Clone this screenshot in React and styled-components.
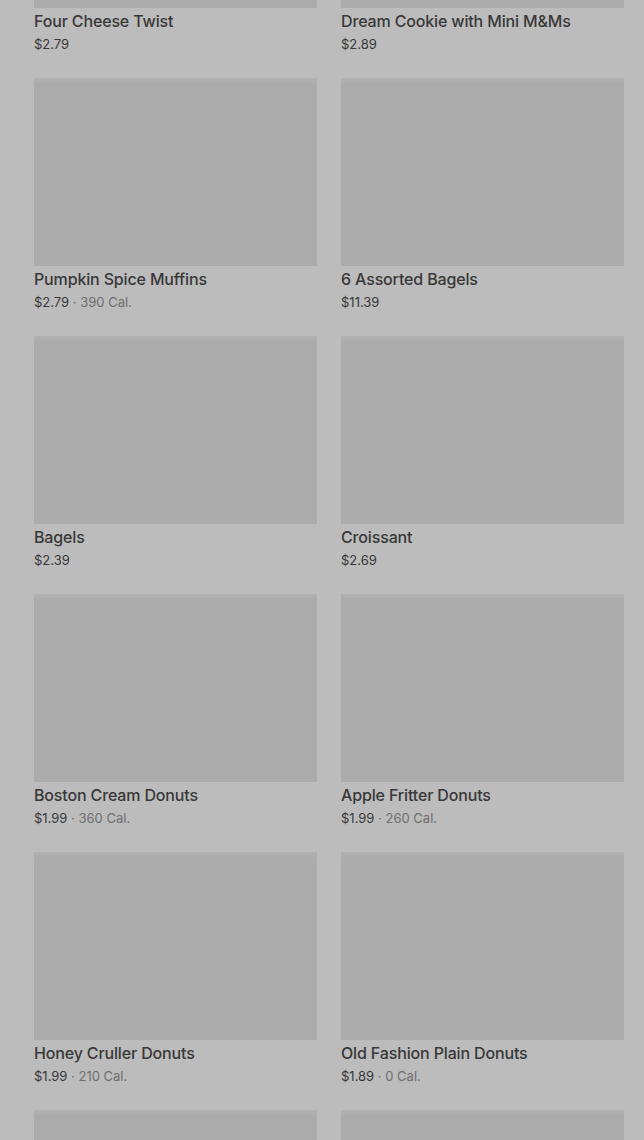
import styled, { createGlobalStyle } from "styled-components";

const GlobalStyle = createGlobalStyle`
  html, body {
    margin: 0;
    padding: 0;
    overflow: hidden;
    background: #bcbcbc;
  }
`;

const Page = styled.div`
  height: 1140px;
  overflow: hidden;
  background: #bcbcbc;
  font-family: Inter, "Noto Sans", "Liberation Sans", sans-serif;
`;

/* the list is scrolled part-way down, so the first row starts above the fold */
const Grid = styled.div`
  margin-top: -180px;
  padding: 0 20px 0 34px;
  display: grid;
  grid-template-columns: 283px 283px;
  column-gap: 24px;
  row-gap: 24px;
`;

const Card = styled.div`
  display: flex;
  flex-direction: column;
`;

const Thumb = styled.div`
  height: 188px;
  background: linear-gradient(180deg, #b2b2b2 0, #ababab 6px, #ababab 100%);
`;

const Name = styled.div`
  margin-top: 3px;
  font-size: 16px;
  line-height: 20px;
  font-weight: 500;
  letter-spacing: -0.15px;
  color: #383838;
`;

const Meta = styled.div`
  margin-top: 3px;
  font-size: 13px;
  line-height: 20px;
  color: #383838;

  span {
    color: #6e6e6e;
  }
`;

const items = [
  { name: "Four Cheese Twist", price: "$2.79" },
  { name: "Dream Cookie with Mini M&Ms", price: "$2.89" },
  { name: "Pumpkin Spice Muffins", price: "$2.79", cal: "390 Cal." },
  { name: "6 Assorted Bagels", price: "$11.39" },
  { name: "Bagels", price: "$2.39" },
  { name: "Croissant", price: "$2.69" },
  { name: "Boston Cream Donuts", price: "$1.99", cal: "360 Cal." },
  { name: "Apple Fritter Donuts", price: "$1.99", cal: "260 Cal." },
  { name: "Honey Cruller Donuts", price: "$1.99", cal: "210 Cal." },
  { name: "Old Fashion Plain Donuts", price: "$1.89", cal: "0 Cal." },
  { id: "next-1" },
  { id: "next-2" },
];

export default function App() {
  return (
    <Page>
      <GlobalStyle />
      <Grid>
        {items.map((it) => (
          <Card key={it.name || it.id}>
            <Thumb />
            {it.name && <Name>{it.name}</Name>}
            {it.price && (
              <Meta>
                {it.price}
                {it.cal && <span> · {it.cal}</span>}
              </Meta>
            )}
          </Card>
        ))}
      </Grid>
    </Page>
  );
}
